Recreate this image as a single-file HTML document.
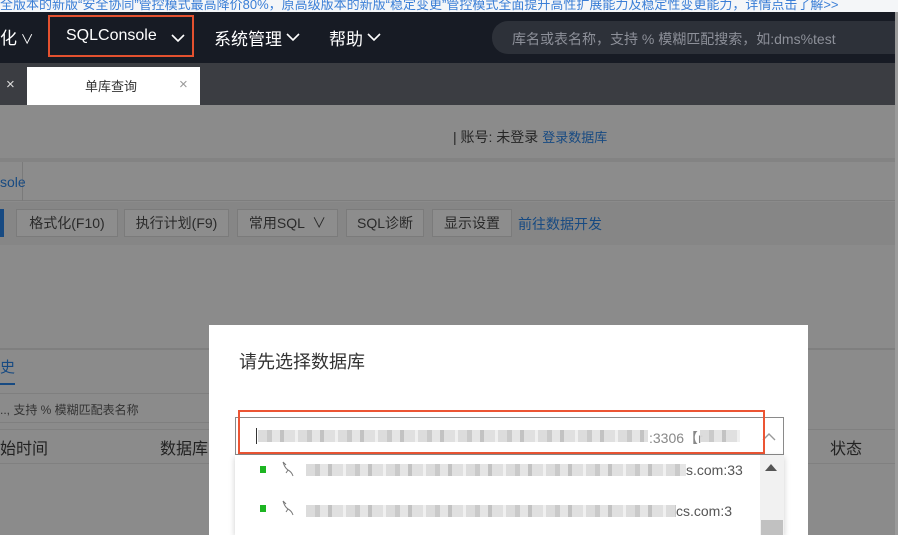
<!DOCTYPE html>
<html><head><meta charset="utf-8"><style>
*{margin:0;padding:0;box-sizing:border-box}
body{width:898px;height:535px;overflow:hidden;position:relative;font-family:"Liberation Sans","Noto Sans CJK SC",sans-serif;background:#8b8b8b;}
.a{position:absolute;white-space:nowrap}
.blur{position:absolute;height:12px;background:repeating-linear-gradient(90deg,#d8d8d8 0 9px,#c4c4c4 9px 14px,#e2e2e2 14px 22px,#bcbcbc 22px 26px,#dcdcdc 26px 37px,#eee 37px 40px);opacity:.9}
.btn{position:absolute;top:209px;height:28px;border:1px solid #7b7b7b;background:#8d8d8d;color:#2a2a2a;font-size:14px;line-height:26px;text-align:center}
</style></head><body>
<div class="a" style="left:0;top:0;width:898px;height:12px;background:#f4f6f8;overflow:hidden">
<div class="a" style="left:0;top:-6px;font-size:13px;color:#3a7ed6">全版本的新版“安全协同”管控模式最高降价80%，原高级版本的新版“稳定变更”管控模式全面提升高性扩展能力及稳定性变更能力，详情点击了解&gt;&gt;</div></div>
<div class="a" style="left:0;top:12px;width:898px;height:51px;background:#171b24"></div>
<div class="a" style="left:0;top:24px;color:#fff;font-size:17px">化<span style="font-size:13px"> ∨</span></div>
<div class="a" style="left:48px;top:15px;width:146px;height:42px;border:2px solid #e4512f"></div>
<div class="a" style="left:66px;top:27px;color:#fff;font-size:16px">SQLConsole</div>
<svg class="a" style="left:171px;top:34px" width="14" height="9"><path d="M1 1l6 6 6-6" stroke="#fff" stroke-width="1.6" fill="none"/></svg>
<div class="a" style="left:214px;top:25px;color:#fff;font-size:17px">系统管理</div>
<svg class="a" style="left:286px;top:33px" width="14" height="9"><path d="M1 1l6 6 6-6" stroke="#fff" stroke-width="1.6" fill="none"/></svg>
<div class="a" style="left:329px;top:25px;color:#fff;font-size:17px">帮助</div>
<svg class="a" style="left:367px;top:33px" width="14" height="9"><path d="M1 1l6 6 6-6" stroke="#fff" stroke-width="1.6" fill="none"/></svg>
<div class="a" style="left:492px;top:21px;width:420px;height:33px;border-radius:16px;background:#2d3139"></div>
<div class="a" style="left:512px;top:29px;color:#8d9099;font-size:14px">库名或表名称，支持 % 模糊匹配搜索，如:dms%test</div>
<div class="a" style="left:0;top:63px;width:898px;height:42px;background:#3b3d42"></div>
<div class="a" style="left:6px;top:76px;color:#ddd;font-size:15px">×</div>
<div class="a" style="left:27px;top:67px;width:173px;height:38px;background:#fff"></div>
<div class="a" style="left:85px;top:76px;color:#333;font-size:13px">单库查询</div>
<div class="a" style="left:179px;top:76px;color:#999;font-size:15px">×</div>
<div class="a" style="left:0;top:158px;width:898px;height:4px;background:#838383"></div>
<div class="a" style="left:453px;top:127px;color:#252525;font-size:14px">| 账号: 未登录 <span style="color:#174a82;font-size:13px">登录数据库</span></div>
<div class="a" style="left:0;top:162px;width:898px;height:39px;background:#8c8c8c;border-bottom:1px solid #7d7d7d"></div>
<div class="a" style="left:22px;top:162px;width:1px;height:39px;background:#7a7a7a"></div>
<div class="a" style="left:0;top:174px;color:#174a82;font-size:14px">sole</div>
<div class="a" style="left:0;top:202px;width:898px;height:43px;background:#868686"></div>
<div class="a" style="left:0;top:209px;width:4px;height:28px;background:#174a82"></div>
<div class="btn" style="left:16px;width:102px">格式化(F10)</div>
<div class="btn" style="left:124px;width:105px">执行计划(F9)</div>
<div class="btn" style="left:237px;width:101px">常用SQL &nbsp;∨</div>
<div class="btn" style="left:346px;width:78px">SQL诊断</div>
<div class="btn" style="left:432px;width:80px">显示设置</div>
<div class="a" style="left:518px;top:214px;color:#174a82;font-size:14px">前往数据开发</div>
<div class="a" style="left:0;top:348px;width:898px;height:2px;background:#7f7f7f"></div>
<div class="a" style="left:0;top:356px;color:#174a82;font-size:15px">史</div>
<div class="a" style="left:0;top:383px;width:15px;height:2px;background:#174a82"></div>
<div class="a" style="left:0;top:393px;width:209px;height:1px;background:#7f7f7f"></div>
<div class="a" style="left:0;top:395px;width:209px;height:28px;border-bottom:1px solid #7f7f7f"></div>
<div class="a" style="left:0;top:401px;color:#333;font-size:12px">.., 支持 % 模糊匹配表名称</div>
<div class="a" style="left:0;top:429px;width:898px;height:1px;background:#808080"></div>
<div class="a" style="left:0;top:435px;color:#222;font-size:16px">始时间</div>
<div class="a" style="left:160px;top:435px;color:#222;font-size:16px">数据库</div>
<div class="a" style="left:830px;top:435px;color:#222;font-size:16px">状态</div>
<div class="a" style="left:0;top:463px;width:898px;height:1px;background:#808080"></div>
<div class="a" style="left:895px;top:12px;width:3px;height:523px;background:#9a9a9a"></div>
<div class="a" style="left:209px;top:325px;width:599px;height:210px;background:#fff"></div>
<div class="a" style="left:239px;top:348px;color:#333;font-size:18px">请先选择数据库</div>
<div class="a" style="left:235px;top:417px;width:549px;height:38px;border:1px solid #8a8a8a"></div>
<div class="a" style="left:256px;top:428px;width:1px;height:16px;background:#333"></div>
<div class="blur" style="left:258px;top:430px;width:390px"></div>
<div class="a" style="left:649px;top:428px;color:#888;font-size:14px">:3306【r</div>
<div class="blur" style="left:700px;top:430px;width:40px"></div>
<svg class="a" style="left:762px;top:432px" width="14" height="9"><path d="M1 8l6-6 6 6" stroke="#999" stroke-width="1.4" fill="none"/></svg>
<div class="a" style="left:238px;top:410px;width:527px;height:44px;border:2px solid #ec5534"></div>
<div class="a" style="left:235px;top:455px;width:549px;height:80px;background:#fff;box-shadow:0 2px 6px rgba(0,0,0,.2)"></div>
<div class="a" style="left:260px;top:466px;width:6px;height:7px;background:#1db522"></div>
<div class="a" style="left:260px;top:505px;width:6px;height:7px;background:#1db522"></div>
<svg class="a" style="left:281px;top:461px" width="16" height="16"><path d="M2 1c1 3 2 6 5 8 2 1 4 3 5 6M2 1l3 3M7 9l-2 3" stroke="#777" stroke-width="1" fill="none"/></svg>
<svg class="a" style="left:281px;top:500px" width="16" height="16"><path d="M2 1c1 3 2 6 5 8 2 1 4 3 5 6M2 1l3 3M7 9l-2 3" stroke="#777" stroke-width="1" fill="none"/></svg>
<div class="blur" style="left:306px;top:464px;width:380px"></div>
<div class="blur" style="left:306px;top:505px;width:370px"></div>
<div class="a" style="left:686px;top:462px;color:#555;font-size:14px">s.com:33</div>
<div class="a" style="left:676px;top:503px;color:#555;font-size:14px">cs.com:3</div>
<div class="a" style="left:760px;top:455px;width:24px;height:80px;background:#f1f1f1"></div>
<svg class="a" style="left:765px;top:464px" width="12" height="8"><path d="M0 7L6 0l6 7z" fill="#555"/></svg>
<div class="a" style="left:761px;top:520px;width:22px;height:15px;background:#c1c1c1"></div>
</body></html>
